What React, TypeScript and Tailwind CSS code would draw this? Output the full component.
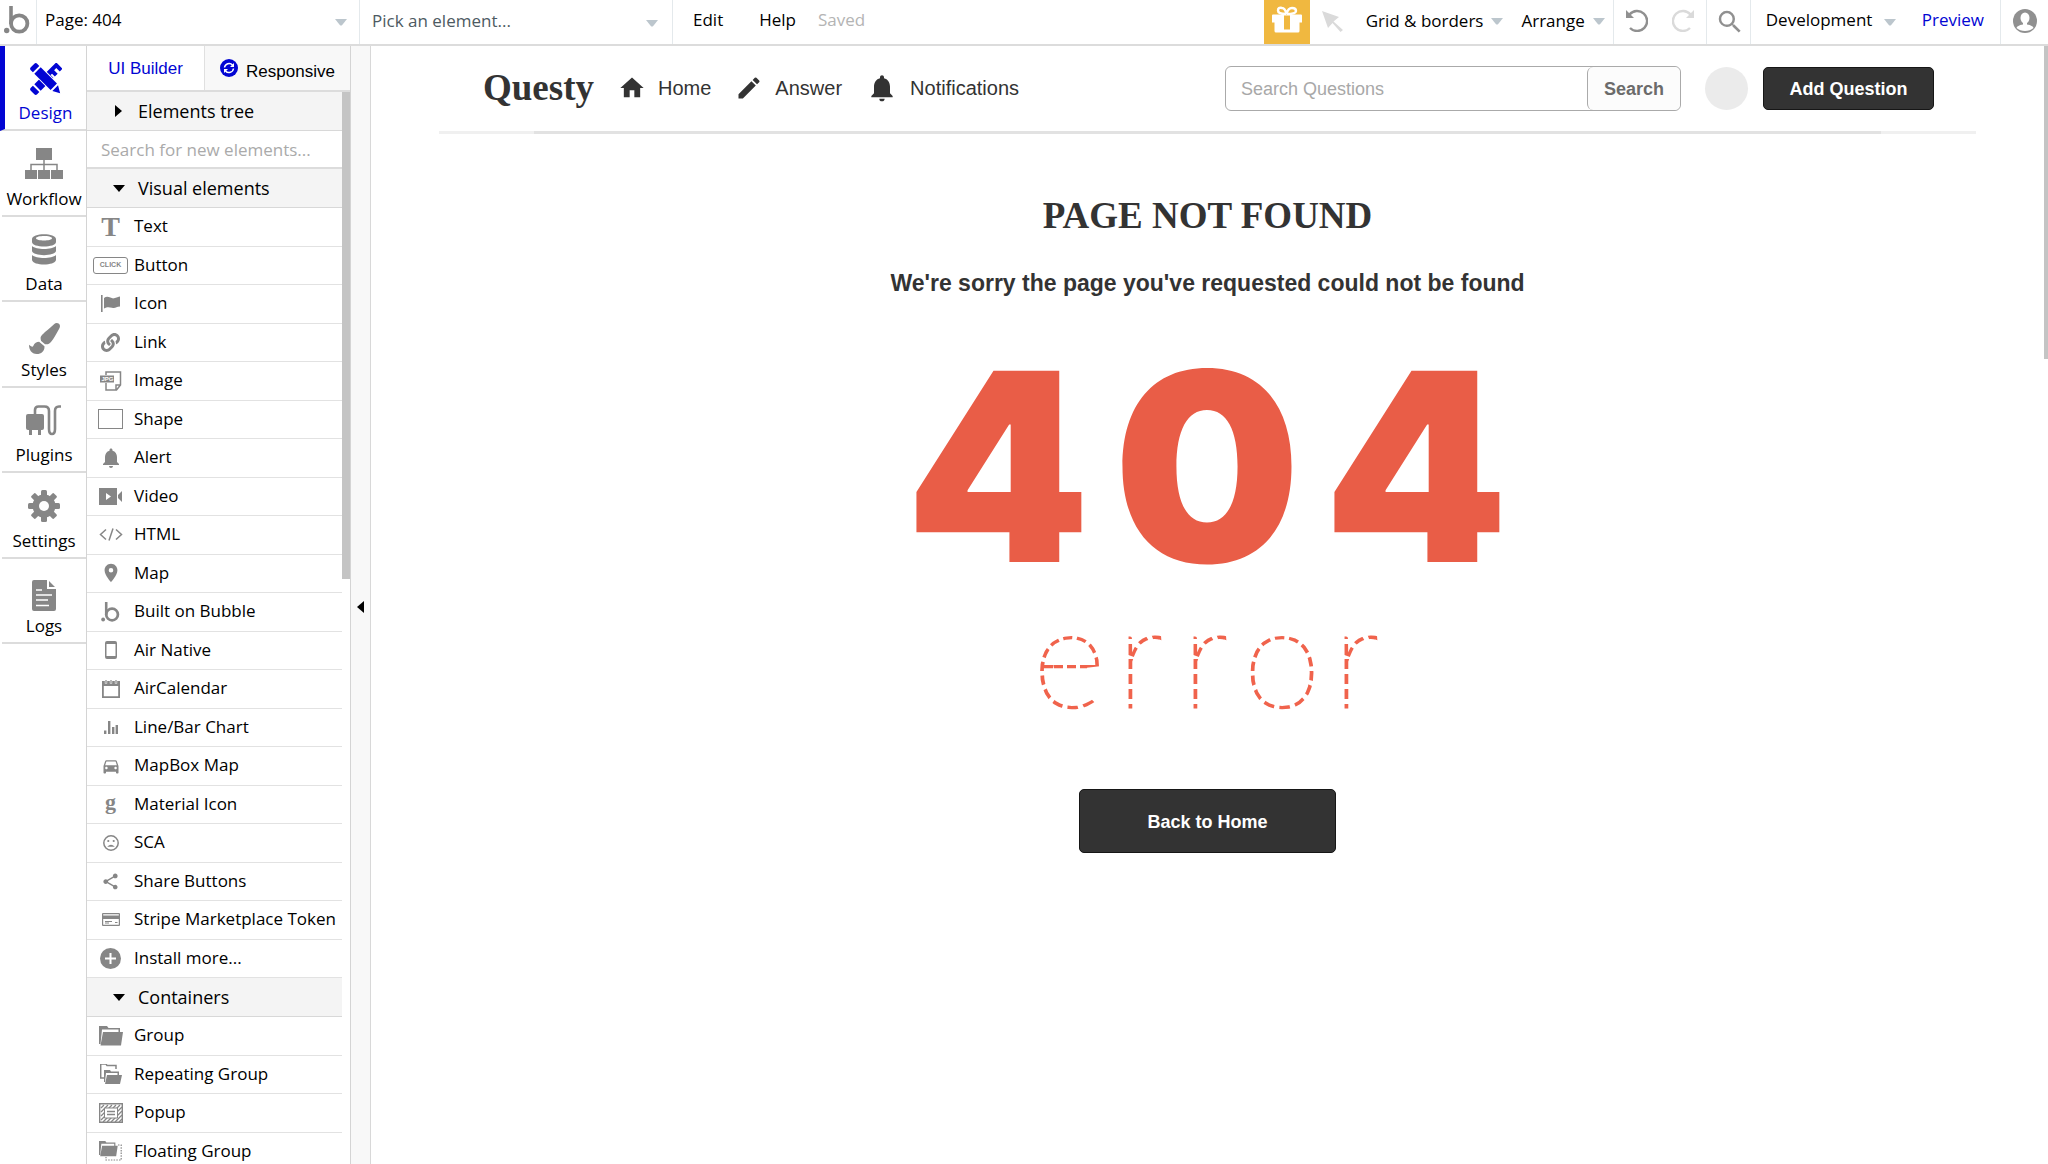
import React, { ReactNode } from 'react';
import { FaPaintBrush, FaLink } from 'react-icons/fa';
import {
  MdCreate,
  MdDirectionsCar,
  MdHome,
  MdLocationOn,
  MdNotifications,
  MdSearch,
  MdShare,
} from 'react-icons/md';

/* ---------- icons ---------- */

interface SvgProps {
  w: number;
  h: number;
  children: ReactNode;
}

function Svg({ w, h, children }: SvgProps) {
  return (
    <svg width={w} height={h} viewBox={`0 0 ${w} ${h}`} fill="currentColor" aria-hidden="true">
      {children}
    </svg>
  );
}

function Caret() {
  return (
    <Svg w={12} h={7}>
      <path d="M0 0h12L7 6.200q-1 .8-2 0z" />
    </Svg>
  );
}

function BubbleMark({ w, h }: { w: number; h: number }) {
  return (
    <svg width={w} height={h} viewBox="0 0 26 28" aria-hidden="true">
      <circle cx="2.700" cy="24.500" r="2.700" fill="currentColor" />
      <path d="M7 0v18" stroke="currentColor" strokeWidth="3.600" />
      <circle cx="15.200" cy="17.500" r="8.200" fill="none" stroke="currentColor" strokeWidth="3.800" />
    </svg>
  );
}

function DesignIcon() {
  return (
    <Svg w={32} h={32}>
      <g transform="rotate(-45 16 16)">
        <path d="M-1 11.500h3v9h-3a2 2 0 0 1-2-2v-5a2 2 0 0 1 2-2z" />
        <path d="M4 11.500H35v9h-4v-5h-3v5h-4v-4h-2v4H4z" />
      </g>
      <g transform="rotate(45 16 16)">
        <path d="M5 10.500H28v11H5z" fill="#fff" />
        <path d="M-1 11.500h3v9h-3a2 2 0 0 1-2-2v-5a2 2 0 0 1 2-2zM4 11.500h23v9H4zM29 12l7 4-7 4z" />
      </g>
    </Svg>
  );
}

function WorkflowIcon() {
  return (
    <Svg w={38} h={32}>
      <path d="M11 0h16v12H11zM0 22h12v9H0zM13 22h12v9H13zM26 22h12v9H26z" />
      <path d="M19 12v10M6 22v-5.500h26V22" fill="none" stroke="currentColor" strokeWidth="1.500" />
    </Svg>
  );
}

function DataIcon() {
  return (
    <Svg w={24} h={31}>
      <path
        fillRule="evenodd"
        d="M0 5c0-6.500 24-6.500 24 0v3c0 6-24 6-24 0zM4 4.300c0 3 16 3 16 0s-16-3-16 0z"
      />
      <path d="M0 12c4 4 20 4 24 0v5c-1 5.500-23 5.500-24 0zM0 21c4 4 20 4 24 0v5c-1 6-23 6-24 0z" />
    </Svg>
  );
}

function PluginsIcon() {
  return (
    <Svg w={36} h={31}>
      <rect x="0" y="9" width="18" height="16" rx="2" />
      <path d="M3 25h3v5H3zM12 25h3v5h-3z" />
      <path
        d="M9 10V5q0-3.500 3.500-3.500h6Q23 1.500 23 6v18q0 5 3 5t3-5V6q0-4.500 4-4.500h2"
        fill="none"
        stroke="currentColor"
        strokeWidth="2.600"
      />
    </Svg>
  );
}

function GearIcon() {
  return (
    <Svg w={32} h={32}>
      {[0, 45, 90, 135].map((deg) => (
        <rect key={deg} x="13" y="0" width="6" height="32" rx="1.500" transform={`rotate(${deg} 16 16)`} />
      ))}
      <circle cx="16" cy="16" r="11.500" />
      <circle cx="16" cy="16" r="5" fill="#fff" />
    </Svg>
  );
}

function LogsIcon() {
  return (
    <Svg w={24} h={31}>
      <path d="M2 0h13v9h9v20q0 2-2 2H2q-2 0-2-2V2q0-2 2-2zM17 1l6 6h-6z" />
      <path d="M4 10h6M4 15h16M4 20h12M4 25.500h13" stroke="#fff" strokeWidth="1.500" />
    </Svg>
  );
}

function FlagIcon() {
  return (
    <Svg w={20} h={17}>
      <path d="M0 0h1.600v17H0zM3 3c4-3 7 1 10 .3 2.500-.5 4.500-1.800 6-1.800v10c-4 0-4 2-8 1.200-3-.6-5-1-8 .8z" />
    </Svg>
  );
}

function ImageIcon() {
  return (
    <Svg w={22} h={20}>
      <path
        d="M6 4V1h14.500v13l-4 5H6v-7M16 18.500V14h4.500"
        fill="none"
        stroke="currentColor"
        strokeWidth="1.500"
      />
      <rect x="0" y="4.500" width="14" height="7" />
      <text x="1.500" y="10.300" fontSize="6" fontWeight="700" fill="#fff" fontFamily="Liberation Sans, sans-serif">
        JPG
      </text>
    </Svg>
  );
}

function VideoIcon() {
  return (
    <Svg w={23} h={17}>
      <path fillRule="evenodd" d="M0 0h18v17H0zM7 5v7l5-3.500z" />
      <path d="M23 3v11l-4-4V7z" />
    </Svg>
  );
}

function CodeIcon() {
  return (
    <Svg w={24} h={13}>
      <path d="M7 1.500L1.500 6.500 7 11.500M17 1.500l5.500 5-5.500 5M14 .5l-4 12" fill="none" stroke="currentColor" strokeWidth="1.500" />
    </Svg>
  );
}

function PhoneIcon() {
  return (
    <Svg w={12} h={18}>
      <path fillRule="evenodd" d="M2 0h8q2 0 2 2v14q0 2-2 2H2q-2 0-2-2V2q0-2 2-2zM1.500 3v12h9V3z" />
    </Svg>
  );
}

function CalendarIcon() {
  return (
    <Svg w={18} h={18}>
      <path fillRule="evenodd" d="M0 1h18v17H0zM1.800 6v10.200h14.400V6z" />
      <path d="M4 0v3.500M9 0v3.500M14 0v3.500" stroke="#fff" strokeWidth="2.400" />
      <path d="M4 0v3M9 0v3M14 0v3" stroke="currentColor" strokeWidth="1.200" />
    </Svg>
  );
}

function ChartIcon() {
  return (
    <Svg w={14} h={13}>
      <path d="M0 9.500h2.400V13H0zM4 0h2.400v13H4zM8 6h2.400v7H8zM11.600 4H14v9h-2.400z" />
    </Svg>
  );
}

function SadIcon() {
  return (
    <Svg w={16} h={16}>
      <circle cx="8" cy="8" r="7.200" fill="none" stroke="currentColor" strokeWidth="1.500" />
      <circle cx="5.300" cy="6" r="1.100" />
      <circle cx="10.700" cy="6" r="1.100" />
      <path d="M4.200 11.800q3.800-4 7.600 0z" />
    </Svg>
  );
}

function CardIcon() {
  return (
    <Svg w={18} h={13}>
      <path fillRule="evenodd" d="M1 0h16q1 0 1 1v11q0 1-1 1H1q-1 0-1-1V1q0-1 1-1zM1.200 1.200v1.300h15.600V1.200zM1.200 6v5.800h15.600V6z" />
      <path d="M3 8.500h7M3 10h4M13 9.500h2.500" stroke="currentColor" strokeWidth="1" />
    </Svg>
  );
}

function PlusIcon() {
  return (
    <Svg w={21} h={21}>
      <circle cx="10.500" cy="10.500" r="10.500" />
      <path d="M10.500 5v11M5 10.500h11" stroke="#fff" strokeWidth="2" />
    </Svg>
  );
}

const FOLDER = 'M0 0h8l1.500 2H21v4h-1.500V3.500H3L1.500 18H0zM4 6h20l-2 13.500H1.500z';

function GroupIcon() {
  return (
    <Svg w={24} h={20}>
      <path d={FOLDER} />
    </Svg>
  );
}

function RepeatingGroupIcon() {
  return (
    <Svg w={22} h={20}>
      <path d="M0 0h6l1 1.500h9V5M.7.500V14H4" fill="none" stroke="currentColor" strokeWidth="1.500" />
      <path d="M4 6h6l1 1.500h8V11h-1.500V9H6l-1 9H4zM7 11h15l-2 9H5z" />
    </Svg>
  );
}

function PopupIcon() {
  return (
    <Svg w={24} h={20}>
      <path
        d="M2 5l3-3M2 9l7-7M2 13L13 2M2 17L17 2M4 19L21 2M8 19L23 4M12 19L23 8M16 19l7-7M20 19l3-3"
        stroke="currentColor"
        strokeWidth="1.300"
      />
      <path d="M.7.700h22.600v18.600H.7z" fill="none" stroke="currentColor" strokeWidth="1.400" />
      <path d="M5.500 5h13v10h-13z" fill="#fff" stroke="currentColor" strokeWidth="1" />
      <path d="M8 8.500h8M8 11.500h8" stroke="currentColor" strokeWidth="1.400" />
    </Svg>
  );
}

function FloatingGroupIcon() {
  return (
    <Svg w={23} h={20}>
      <g transform="scale(.78)">
        <path d={FOLDER} />
      </g>
      <path d="M19 4h3.200v15H7v-3" fill="none" stroke="currentColor" strokeWidth="1.200" strokeDasharray="1.500 1.200" />
    </Svg>
  );
}

function UndoIcon() {
  return (
    <Svg w={22} h={23}>
      <path d="M3.500 5.500A10 10 0 1 1 4 19" fill="none" stroke="currentColor" strokeWidth="2.400" />
      <path d="M0 1v8h8z" />
    </Svg>
  );
}

function GiftIcon() {
  return (
    <Svg w={30} h={27}>
      <path
        d="M14 8Q6 8 6 4.500T10 2q3 0 4.500 6Q16 2 20 2q4 0 4 3t-9 3"
        fill="none"
        stroke="currentColor"
        strokeWidth="2.400"
      />
      <path d="M1 8.500h28q1 0 1 1v7h-2.500V25q0 1.500-1.500 1.500H4Q2.500 26.500 2.500 25v-8.500H0v-7q0-1 1-1z" />
      <path d="M12 9.500h6v14h-6z" fill="#f0b840" />
    </Svg>
  );
}

/* ---------- data ---------- */

const NAV_ITEMS: { label: string; icon: ReactNode }[] = [
  { label: 'Design', icon: <DesignIcon /> },
  { label: 'Workflow', icon: <WorkflowIcon /> },
  { label: 'Data', icon: <DataIcon /> },
  {
    label: 'Styles',
    icon: (
      <span className="pt-1">
        <FaPaintBrush size={31} />
      </span>
    ),
  },
  { label: 'Plugins', icon: <PluginsIcon /> },
  { label: 'Settings', icon: <GearIcon /> },
  {
    label: 'Logs',
    icon: (
      <span className="pt-1">
        <LogsIcon />
      </span>
    ),
  },
];

interface ElementItem {
  label: string;
  icon: ReactNode;
}

const VISUAL_ELEMENTS: ElementItem[] = [
  { label: 'Text', icon: <span className="font-['Liberation_Serif',serif] text-[28px] leading-none font-bold">T</span> },
  {
    label: 'Button',
    icon: (
      <span className="flex h-[17px] w-[35px] items-center justify-center rounded-[3px] border border-[#868686] font-['Liberation_Sans',sans-serif] text-[7px] font-bold">
        CLICK
      </span>
    ),
  },
  { label: 'Icon', icon: <FlagIcon /> },
  { label: 'Link', icon: <FaLink size={19} /> },
  { label: 'Image', icon: <ImageIcon /> },
  { label: 'Shape', icon: <span className="h-5 w-[25px] border border-[#868686]" /> },
  { label: 'Alert', icon: <MdNotifications size={24} /> },
  { label: 'Video', icon: <VideoIcon /> },
  { label: 'HTML', icon: <CodeIcon /> },
  { label: 'Map', icon: <MdLocationOn size={22} /> },
  { label: 'Built on Bubble', icon: <BubbleMark w={19} h={20} /> },
  { label: 'Air Native', icon: <PhoneIcon /> },
  { label: 'AirCalendar', icon: <CalendarIcon /> },
  { label: 'Line/Bar Chart', icon: <ChartIcon /> },
  { label: 'MapBox Map', icon: <MdDirectionsCar size={20} /> },
  {
    label: 'Material Icon',
    icon: <span className="pb-1 font-['Liberation_Serif',serif] text-[22px] leading-none font-bold">g</span>,
  },
  { label: 'SCA', icon: <SadIcon /> },
  { label: 'Share Buttons', icon: <MdShare size={19} /> },
  { label: 'Stripe Marketplace Token', icon: <CardIcon /> },
  { label: 'Install more...', icon: <PlusIcon /> },
];

const CONTAINERS: ElementItem[] = [
  { label: 'Group', icon: <GroupIcon /> },
  { label: 'Repeating Group', icon: <RepeatingGroupIcon /> },
  { label: 'Popup', icon: <PopupIcon /> },
  { label: 'Floating Group', icon: <FloatingGroupIcon /> },
];

/* ---------- editor chrome ---------- */

function TopBar() {
  return (
    <header className="flex h-[46px] shrink-0 items-stretch border-b-2 border-[#dcdcdc] bg-white text-[17px]">
      <a href="#home" aria-label="Bubble" className="flex w-[37px] items-center border-r border-[#e4e9ec] pb-1 pl-1 text-[#868686]">
        <BubbleMark w={26} h={28} />
      </a>
      <div className="relative w-[323px] border-r border-[#e4e9ec]">
        <select aria-label="Page" className="h-full w-full appearance-none pb-1 pl-2 outline-none">
          <option>Page: 404</option>
        </select>
        <span className="pointer-events-none absolute top-[19px] right-3 text-[#bcc6cd]">
          <Caret />
        </span>
      </div>
      <div className="relative w-[313px] border-r border-[#e4e9ec] text-[#4d5a62]">
        <select aria-label="Element" className="h-full w-full appearance-none pb-0.5 pl-3 outline-none">
          <option>Pick an element...</option>
        </select>
        <span className="pointer-events-none absolute top-5 right-3.5 text-[#bcc6cd]">
          <Caret />
        </span>
      </div>
      <nav className="flex items-center pb-1 pl-5">
        <button type="button">Edit</button>
        <button type="button" className="ml-9">
          Help
        </button>
        <span className="ml-[22px] text-[#b4b4b4]">Saved</span>
      </nav>

      <div className="ml-auto flex items-stretch">
        <button type="button" aria-label="Gift" className="flex w-[46px] items-center justify-center bg-[#f0b840] pb-1.5 text-white">
          <GiftIcon />
        </button>
        <button type="button" aria-label="Pointer" className="flex w-14 items-center pb-0.5 pl-3 text-[#dadada]">
          <Svg w={21} h={21}>
            <path d="M0 0l17 6-5.500 4.500L21 19l-2.500 2-8-9L6 17z" />
          </Svg>
        </button>
        <button type="button" className="flex items-center gap-2 pb-0.5">
          Grid &amp; borders
          <span className="text-[#bcc6cd]">
            <Caret />
          </span>
        </button>
        <button type="button" className="flex items-center gap-2 border-r border-[#e4e9ec] pr-2 pb-0.5 pl-[18px]">
          Arrange
          <span className="text-[#bcc6cd]">
            <Caret />
          </span>
        </button>
        <div className="flex w-[93px] items-center justify-center gap-6 border-r border-[#e4e9ec] pb-1">
          <button type="button" aria-label="Undo" className="text-[#909090]">
            <UndoIcon />
          </button>
          <button type="button" aria-label="Redo" className="-scale-x-100 text-[#dadada]">
            <UndoIcon />
          </button>
        </div>
        <button type="button" aria-label="Search" className="flex w-11 items-center justify-center border-r border-[#e4e9ec] pl-1 text-[#909090]">
          <MdSearch size={30} />
        </button>
        <div className="relative w-[155px]">
          <select aria-label="Version" className="h-full w-full appearance-none pb-1 pl-[15px] outline-none">
            <option>Development</option>
          </select>
          <span className="pointer-events-none absolute top-[19px] right-2.5 text-[#bcc6cd]">
            <Caret />
          </span>
        </div>
        <a href="#preview" className="flex items-center border-r border-[#e4e9ec] px-4 pb-1 text-[#0205d3]">
          Preview
        </a>
        <button type="button" aria-label="Account" className="flex w-[47px] items-center justify-center pb-0.5 text-[#909090]">
          <Svg w={24} h={24}>
            <circle cx="12" cy="12" r="12" />
            <ellipse cx="12" cy="9" rx="4.500" ry="5.500" fill="#fff" />
            <path d="M10 13h4v2.500q6 1 6.500 3.500Q17 22 12 22t-8.500-3Q4 16.500 10 15.500z" fill="#fff" />
          </Svg>
        </button>
      </div>
    </header>
  );
}

function SideNav() {
  return (
    <nav className="w-[87px] shrink-0 border-r border-[#d4d4d4]">
      <ul className="flex h-[598px] flex-col">
        {NAV_ITEMS.map(({ label, icon }, i) => (
          <li key={label} className={i === 0 ? 'flex-1 text-[#0205d3]' : 'flex-1 pl-0.5 text-[#868686]'}>
            <button
              type="button"
              className={
                i === 0
                  ? 'flex h-full w-full flex-col items-center justify-between border-b-2 border-l-5 border-b-[#dcdcdc] border-l-[#0205d3] pt-[17px] pb-1'
                  : 'flex h-full w-full flex-col items-center justify-between border-b-2 border-[#dcdcdc] pt-[17px] pb-1'
              }
            >
              {icon}
              <span className={i === 0 ? 'text-[17px] leading-6' : 'text-[17px] leading-6 text-black'}>{label}</span>
            </button>
          </li>
        ))}
      </ul>
    </nav>
  );
}

function SectionHeader({ label, open }: { label: string; open: boolean }) {
  return (
    <button
      type="button"
      aria-expanded={open}
      className="flex h-[39px] w-full items-center border-b border-[#d8d8d8] bg-[#f4f4f4] text-[18px]"
    >
      <span className="flex w-[51px] justify-center pl-3">
        {open ? (
          <Svg w={12} h={7}>
            <path d="M0 0h12L6 7z" />
          </Svg>
        ) : (
          <Svg w={7} h={12}>
            <path d="M0 0v12l7-6z" />
          </Svg>
        )}
      </span>
      {label}
    </button>
  );
}

function ElementRow({ label, icon }: ElementItem) {
  return (
    <li className="min-h-0 flex-1">
      <button type="button" className="flex h-full w-full items-center border-b border-[#e2e2e2] text-[17px]">
        <span className="flex w-[47px] shrink-0 items-center justify-center text-[#868686]">{icon}</span>
        <span className="pb-0.5 whitespace-nowrap">{label}</span>
      </button>
    </li>
  );
}

function ElementsPanel() {
  return (
    <aside className="flex w-[264px] shrink-0 flex-col border-r border-[#d4d4d4]">
      <div className="flex h-[46px] shrink-0 border-b-2 border-[#dcdcdc] font-['Liberation_Sans',Arial,sans-serif] text-[17px]">
        <button type="button" className="w-[117px] pt-0.5 text-[#0205d3]">
          UI Builder
        </button>
        <button type="button" className="flex flex-1 items-center justify-center gap-2 border-l border-[#e0e0e0] bg-[#f8f8f8]">
          <span className="text-[#0205d3]">
            <Svg w={18} h={18}>
              <circle cx="9" cy="9" r="9" />
              <path d="M4.500 8.500A4.600 4.600 0 0 1 12.500 6M13.500 9.500A4.600 4.600 0 0 1 5.500 12" fill="none" stroke="#fff" strokeWidth="1.500" />
              <path d="M14 4v4h-4zM4 14v-4h4z" fill="#fff" />
            </Svg>
          </span>
          <span className="pt-2">Responsive</span>
        </button>
      </div>
      <div className="flex min-h-0 flex-1 overflow-hidden">
        <div className="min-w-0 flex-1">
          <SectionHeader label="Elements tree" open={false} />
          <input
            type="search"
            aria-label="Search for new elements"
            placeholder="Search for new elements..."
            className="block h-[38px] w-full border-b-2 border-[#dcdcdc] px-3.5 text-[17px] outline-none placeholder:text-[#aaaaaa]"
          />
          <SectionHeader label="Visual elements" open />
          <ul className="flex h-[770px] flex-col">
            {VISUAL_ELEMENTS.map((item) => (
              <ElementRow key={item.label} {...item} />
            ))}
          </ul>
          <SectionHeader label="Containers" open />
          <ul className="flex h-[154px] flex-col">
            {CONTAINERS.map((item) => (
              <ElementRow key={item.label} {...item} />
            ))}
          </ul>
        </div>
        <div className="w-2">
          <div className="h-[487px] bg-[#c4c4c4]" />
        </div>
      </div>
    </aside>
  );
}

/* ---------- page being edited ---------- */

function SiteHeader() {
  return (
    <div className="w-full max-w-[1537px]">
      <div className="flex h-[85px] items-center pr-[42px] pl-11 text-[#333333]">
        <a href="#questy" className="pb-0.5 font-['Liberation_Serif',serif] text-[37px] leading-none font-bold">
          Questy
        </a>
        <nav className="ml-6 flex items-center pb-0.5 text-[20px]">
          <a href="#home" className="flex items-center gap-3">
            <MdHome size={28} />
            Home
          </a>
          <a href="#answer" className="ml-6 flex items-center gap-3">
            <MdCreate size={28} />
            Answer
          </a>
          <a href="#notifications" className="ml-6 flex items-center gap-3">
            <MdNotifications size={32} />
            Notifications
          </a>
        </nav>
        <form className="ml-auto flex h-[45px] w-[456px] rounded-md border border-[#aaaaaa]">
          <input
            type="text"
            aria-label="Search Questions"
            placeholder="Search Questions"
            className="min-w-0 flex-1 pt-0.5 pl-[15px] text-[18px] outline-none placeholder:text-[#a8a8a8]"
          />
          <button type="button" className="w-[93px] rounded-md border-l border-[#aaaaaa] bg-[#fcfcfc] pt-0.5 text-[18px] font-bold text-[#6b6b6b]">
            Search
          </button>
        </form>
        <div className="ml-6 size-[43px] rounded-full bg-[#ebebeb]" />
        <button type="button" className="ml-[15px] h-[43px] w-[171px] rounded-[5px] border border-[#161616] bg-[#333333] pt-0.5 text-[18px] font-bold text-white">
          Add Question
        </button>
      </div>
      <div className="h-[3px] bg-[#f0f0f0] px-[95px]">
        <div className="h-full bg-[#e2e2e2]" />
      </div>
    </div>
  );
}

function ErrorArt() {
  return (
    <svg width="612" height="440" viewBox="0 -60 612 440" role="img" aria-label="404 error">
      {/* cuts the thin lettering into dashes along each stroke */}
      <mask id="dashes" maskUnits="userSpaceOnUse" x="100" y="240" width="412" height="130">
        <g fill="none" stroke="#fff" strokeWidth="24" strokeDasharray="10 5">
          <ellipse cx="168" cy="306" rx="29" ry="34" pathLength="210" />
          <ellipse cx="380" cy="306" rx="31" ry="34" pathLength="210" />
          <path d="M152 303h33" strokeWidth="12" strokeDasharray="9 4" />
          {[226, 291, 442].map((x) => (
            <g key={x} transform={`translate(${x} 0)`}>
              <path d="M0 264v84" strokeWidth="12" />
              <path d="M6 292Q14 270 36 270" strokeWidth="18" strokeDasharray="9 5" />
            </g>
          ))}
        </g>
      </mask>
      <text
        x="96 305 514"
        y="197"
        fontFamily="Inter, sans-serif"
        fontWeight="900"
        fontSize="263"
        textAnchor="middle"
        fill="#e95d47"
      >
        404
      </text>
      <g mask="url(#dashes)">
        <text
          x="167 239 304 380 455"
          y="342"
          fontFamily="Lato, sans-serif"
          fontWeight="100"
          fontSize="142"
          textAnchor="middle"
          fill="#f0634c"
          stroke="#f0634c"
          strokeWidth="2"
        >
          error
        </text>
      </g>
    </svg>
  );
}

function PageCanvas() {
  return (
    <main className="flex min-w-0 flex-1 flex-col items-center font-['Liberation_Sans',Arial,sans-serif]">
      <SiteHeader />
      <h1 className="mt-[60px] font-['Liberation_Serif',serif] text-[37px] leading-[44px] font-bold text-[#333333]">
        PAGE NOT FOUND
      </h1>
      <p className="mt-[31px] text-[23px] leading-7 font-bold text-[#333333]">
        We're sorry the page you've requested could not be found
      </p>
      <div className="mt-2">
        <ErrorArt />
      </div>
      <button
        type="button"
        className="mt-11 h-16 w-[257px] rounded-[5px] border border-[#161616] bg-[#333333] pt-0.5 text-[18px] font-bold text-white"
      >
        Back to Home
      </button>
    </main>
  );
}

export default function App() {
  return (
    <div className="flex h-screen flex-col overflow-hidden bg-white font-['Open_Sans',sans-serif] text-black">
      <TopBar />
      <div className="flex min-h-0 flex-1">
        <SideNav />
        <ElementsPanel />
        <button
          type="button"
          aria-label="Collapse panel"
          className="flex w-5 shrink-0 items-center justify-center border-r border-[#d8d8d8] bg-[#f8f8f8] pt-1"
        >
          <Svg w={7} h={12}>
            <path d="M7 0v12L0 6z" />
          </Svg>
        </button>
        <PageCanvas />
        <div className="w-1 shrink-0">
          <div className="h-[313px] bg-[#c4c4c4]" />
        </div>
      </div>
    </div>
  );
}
